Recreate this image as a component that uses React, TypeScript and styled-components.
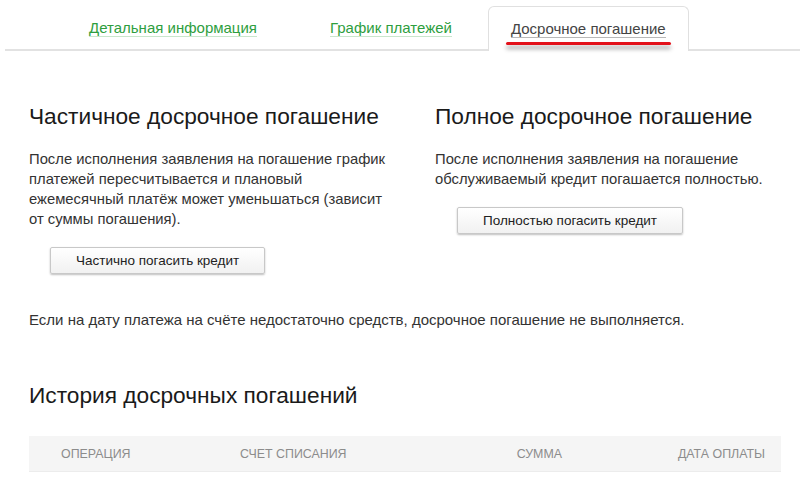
import { FC } from "react";
import styled, { createGlobalStyle } from "styled-components";

const GlobalStyle = createGlobalStyle`
  html, body {
    margin: 0;
    padding: 0;
    background: #fff;
  }
  body {
    font-family: "Liberation Sans", Arial, sans-serif;
    color: #222;
  }
`;

const Page = styled.div`
  width: 800px;
  height: 493px;
  overflow: hidden;
  background: #fff;
`;

const TabBar = styled.nav`
  display: flex;
  align-items: flex-end;
  height: 49px;
  margin-left: 5px;
  padding-left: 59px;
  border-bottom: 2px solid #e2e2e2;
`;

const Tab = styled.div<{ $active?: boolean; $space?: number }>`
  position: relative;
  box-sizing: border-box;
  height: ${(p) => (p.$active ? "45px" : "40px")};
  margin-bottom: ${(p) => (p.$active ? "-2px" : "0")};
  margin-right: ${(p) => p.$space ?? 0}px;
  padding: ${(p) => (p.$active ? "13px 22px 0" : "9px 24px 0")};
  background: #fff;
  border: ${(p) => (p.$active ? "1px solid #e0e0e0" : "1px solid transparent")};
  border-bottom: none;
  border-radius: 6px 6px 0 0;
  font-size: 15px;
`;

const TabLink = styled.span<{ $active?: boolean }>`
  color: ${(p) => (p.$active ? "#444" : "#2e9e3e")};
  border-bottom: 1px solid ${(p) => (p.$active ? "#b8b8b8" : "#c9e6cc")};
  white-space: nowrap;
`;

const Mark = styled.div`
  position: absolute;
  left: 17px;
  right: 17px;
  top: 35px;
  height: 3px;
  border-radius: 2px;
  background: #e3121b;
  box-shadow: 0 4px 4px rgba(0, 0, 0, 0.35);
`;

const Content = styled.main`
  padding: 0 20px 0 29px;
`;

const Columns = styled.div`
  display: grid;
  grid-template-columns: 406px 1fr;
  padding-top: 52px;
`;

const Column = styled.section`
  display: flex;
  flex-direction: column;
  align-items: flex-start;
`;

const Heading = styled.h2`
  margin: 0;
  font-size: 22.7px;
  font-weight: normal;
  color: #1a1a1a;
  line-height: 27px;
`;

const Text = styled.p`
  margin: 19px 0 0;
  font-size: 14.8px;
  line-height: 20px;
  color: #333;
`;

const Button = styled.button<{ $indent: number }>`
  margin: 18px 0 0 ${(p) => p.$indent}px;
  height: 27px;
  padding: 0 25px;
  font-family: "Liberation Sans", Arial, sans-serif;
  font-size: 13.5px;
  color: #222;
  background: linear-gradient(#ffffff, #f1f1f1);
  border: 1px solid #c8c8c8;
  border-radius: 2px;
  box-shadow: 0 1px 2px rgba(0, 0, 0, 0.25);
`;

const Note = styled.p`
  margin: 37px 0 0;
  font-size: 15px;
  color: #333;
`;

const HistoryHeading = styled(Heading)`
  margin-top: 54px;
`;

const Table = styled.div`
  margin-top: 27px;
  width: 752px;
`;

const HeadRow = styled.div`
  display: grid;
  grid-template-columns: 179px 1fr 160px 203px;
  align-items: center;
  height: 35px;
  background: #f5f5f5;
  border-bottom: 1px solid #ececec;
`;

const HeadCell = styled.div<{ $align?: "left" | "right" }>`
  font-size: 12.4px;
  color: #8c8c8c;
  text-align: ${(p) => p.$align ?? "left"};
  padding: 0 16px 0 32px;
`;

const tabs = [
  { title: "Детальная информация", space: 23 },
  { title: "График платежей", space: 11 },
];

const App: FC = () => {
  return (
    <Page>
      <GlobalStyle />
      <TabBar>
        {tabs.map((t) => (
          <Tab key={t.title} $space={t.space}>
            <TabLink>{t.title}</TabLink>
          </Tab>
        ))}
        <Tab $active>
          <TabLink $active>Досрочное погашение</TabLink>
          <Mark />
        </Tab>
      </TabBar>
      <Content>
        <Columns>
          <Column>
            <Heading>Частичное досрочное погашение</Heading>
            <Text>
              После исполнения заявления на погашение график
              <br />
              платежей пересчитывается и плановый
              <br />
              ежемесячный платёж может уменьшаться (зависит
              <br />
              от суммы погашения).
            </Text>
            <Button $indent={21}>Частично погасить кредит</Button>
          </Column>
          <Column>
            <Heading>Полное досрочное погашение</Heading>
            <Text>
              После исполнения заявления на погашение
              <br />
              обслуживаемый кредит погашается полностью.
            </Text>
            <Button $indent={22}>Полностью погасить кредит</Button>
          </Column>
        </Columns>
        <Note>
          Если на дату платежа на счёте недостаточно средств, досрочное
          погашение не выполняется.
        </Note>
        <HistoryHeading>История досрочных погашений</HistoryHeading>
        <Table>
          <HeadRow>
            <HeadCell>ОПЕРАЦИЯ</HeadCell>
            <HeadCell>СЧЕТ СПИСАНИЯ</HeadCell>
            <HeadCell $align="right">СУММА</HeadCell>
            <HeadCell $align="right">ДАТА ОПЛАТЫ</HeadCell>
          </HeadRow>
        </Table>
      </Content>
    </Page>
  );
};

export default App;
